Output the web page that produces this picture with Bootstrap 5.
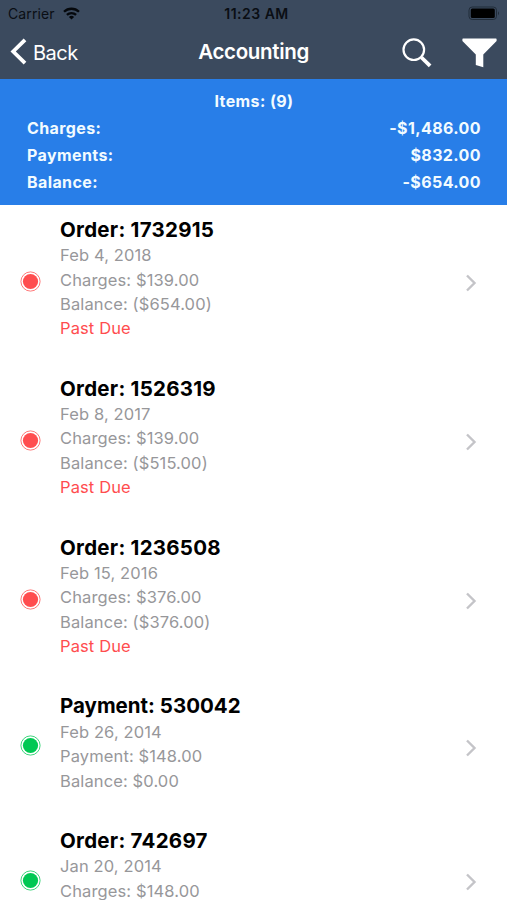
<!DOCTYPE html>
<html lang="en">
<head>
<meta charset="utf-8">
<meta name="viewport" content="width=device-width, initial-scale=1">
<title>Accounting</title>
<link href="https://cdn.jsdelivr.net/npm/bootstrap@5.3.0/dist/css/bootstrap.min.css" rel="stylesheet">
<style>
body{font-family:Inter,"Liberation Sans",sans-serif;height:900px;background:#fff}
.top-area{background:#3b4a5e;height:79px}
.status-line{height:27px;font-size:14px;color:#0a0e14;padding:0 7px 0 8px}
.status-line .carrier{letter-spacing:.1px}
.status-line .clock{font-weight:600;letter-spacing:.5px;margin-left:3px}
.title-bar{height:52px;color:#fff;padding:0 10px 0 10px}
.title-bar .side{flex:1 1 0}
.back-label{font-size:20px;letter-spacing:-.5px;line-height:24px;margin-left:6px;margin-top:-1px}
.page-title{font-size:20.5px;font-weight:600;letter-spacing:-.33px;margin-top:-1px}
.filter-icon{margin-left:30px}
.summary{background:#287ee8;height:126px;padding:9px 26px 0 27px;color:#f2fbff;font-size:16px;font-weight:700;line-height:27px;letter-spacing:.4px}
.entry{padding:11px 30px 23px 20px;line-height:24.4px;font-size:16.5px;color:#97979a;letter-spacing:.12px}
.entry h2{font-size:20.5px;line-height:27.2px;font-weight:700;color:#000;margin:0;letter-spacing:.25px}
.entry .payment-title{letter-spacing:0}
.dot{width:21px;height:21px;margin:6px 19px 0 0}
.chev{margin-top:10px}
.last-entry .dot{margin-top:43px}
.last-entry .chev{margin-top:45px}
.late{color:#ff4d4f}
.paid{color:#00c853}
</style>
<script src="https://cdn.jsdelivr.net/npm/bootstrap@5.3.0/dist/js/bootstrap.bundle.min.js"></script>
</head>
<body class="overflow-hidden">
<svg class="d-none" xmlns="http://www.w3.org/2000/svg">
<symbol id="dot" viewBox="0 0 21 21"><circle cx="10.5" cy="10.5" r="9.6" fill="none" stroke="currentColor" stroke-width="1" opacity=".75"/><circle cx="10.5" cy="10.5" r="7.6" fill="currentColor"/></symbol>
<symbol id="chev" viewBox="0 0 12 20"><path d="M2 2.5 9.5 10 2 17.5" fill="none" stroke="#c4c4c8" stroke-width="2.4"/></symbol>
</svg>
<header class="top-area">
<div class="status-line d-flex align-items-center position-relative">
<span class="carrier">Carrier</span>
<svg class="ms-2" width="17" height="13" viewBox="0 0 17 13"><g fill="none" stroke="#05080c" stroke-width="2.3"><path d="M1 4.8a10.7 10.7 0 0 1 15 0"/><path d="M3.9 7.9a6.6 6.6 0 0 1 9.2 0"/></g><path d="M5.9 10a3.7 3.7 0 0 1 5.2 0l-2.6 2.6z" fill="#05080c"/></svg>
<span class="clock position-absolute start-50 translate-middle-x">11:23 AM</span>
<svg class="ms-auto" width="32" height="15" viewBox="0 0 32 15"><rect x="1" y="1" width="27.5" height="12.5" rx="3.2" fill="none" stroke="#212c39" stroke-width="1"/><rect x="2.8" y="2.6" width="24" height="9.4" rx="1.5" fill="#000"/><path d="M30 5.2q2 2 0 4z" fill="#212c39"/></svg>
</div>
<nav class="title-bar d-flex align-items-center">
<div class="side d-flex align-items-center">
<svg class="mb-1" width="17" height="28" viewBox="0 0 17 28"><path d="M15 2.8 3.2 14.5 15 26.2" fill="none" stroke="#fff" stroke-width="3.8"/></svg>
<span class="back-label">Back</span>
</div>
<span class="page-title">Accounting</span>
<div class="side d-flex align-items-center justify-content-end">
<svg width="30" height="30" viewBox="0 0 30 30"><circle cx="11.8" cy="11.7" r="10.3" fill="none" stroke="#fff" stroke-width="2.2"/><path d="m19.5 19.5 8.6 8.3" stroke="#fff" stroke-width="3.8"/></svg>
<svg class="filter-icon" width="35" height="30" viewBox="0 0 35 30"><path d="M1 .4h33q.6 0 .6.8v1.9L21.3 16.6v12.6l-7.5-2.2V16.6L.4 3.1V1.2q0-.8.6-.8z" fill="#fff"/></svg>
</div>
</nav>
</header>
<section class="summary">
<div class="text-center">Items: (9)</div>
<div class="d-flex justify-content-between"><span>Charges:</span><span>-$1,486.00</span></div>
<div class="d-flex justify-content-between"><span>Payments:</span><span>$832.00</span></div>
<div class="d-flex justify-content-between"><span>Balance:</span><span>-$654.00</span></div>
</section>
<main>
<article class="entry d-flex align-items-center"><svg class="dot late flex-shrink-0"><use href="#dot"/></svg><div class="flex-grow-1"><h2>Order: 1732915</h2><div>Feb 4, 2018</div><div>Charges: $139.00</div><div>Balance: ($654.00)</div><div class="late">Past Due</div></div><svg class="chev" width="12" height="20"><use href="#chev"/></svg></article>
<article class="entry d-flex align-items-center"><svg class="dot late flex-shrink-0"><use href="#dot"/></svg><div class="flex-grow-1"><h2>Order: 1526319</h2><div>Feb 8, 2017</div><div>Charges: $139.00</div><div>Balance: ($515.00)</div><div class="late">Past Due</div></div><svg class="chev" width="12" height="20"><use href="#chev"/></svg></article>
<article class="entry d-flex align-items-center"><svg class="dot late flex-shrink-0"><use href="#dot"/></svg><div class="flex-grow-1"><h2>Order: 1236508</h2><div>Feb 15, 2016</div><div>Charges: $376.00</div><div>Balance: ($376.00)</div><div class="late">Past Due</div></div><svg class="chev" width="12" height="20"><use href="#chev"/></svg></article>
<article class="entry d-flex align-items-center"><svg class="dot paid flex-shrink-0"><use href="#dot"/></svg><div class="flex-grow-1"><h2 class="payment-title">Payment: 530042</h2><div>Feb 26, 2014</div><div>Payment: $148.00</div><div>Balance: $0.00</div></div><svg class="chev" width="12" height="20"><use href="#chev"/></svg></article>
<article class="entry last-entry pb-0 d-flex align-items-start"><svg class="dot paid flex-shrink-0"><use href="#dot"/></svg><div class="flex-grow-1"><h2>Order: 742697</h2><div>Jan 20, 2014</div><div>Charges: $148.00</div></div><svg class="chev" width="12" height="20"><use href="#chev"/></svg></article>
</main>
</body>
</html>
